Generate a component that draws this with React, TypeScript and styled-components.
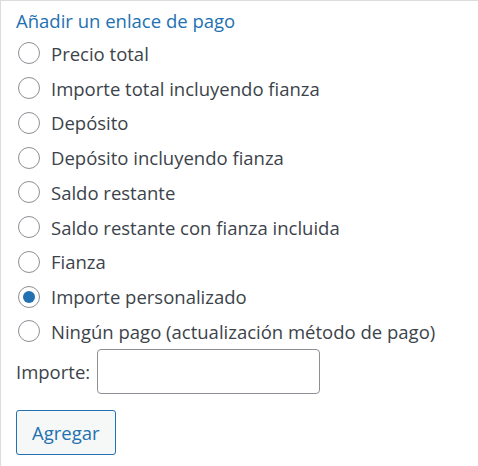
import React, { useState } from "react";
import styled, { createGlobalStyle } from "styled-components";

const GlobalStyle = createGlobalStyle`
  html, body { margin: 0; padding: 0; background: #fff; }
  body { font-family: "Open Sans", "Noto Sans", sans-serif; color: #3c434a; }
  * { box-sizing: border-box; }
`;

const options = [
  "Precio total",
  "Importe total incluyendo fianza",
  "Depósito",
  "Depósito incluyendo fianza",
  "Saldo restante",
  "Saldo restante con fianza incluida",
  "Fianza",
  "Importe personalizado",
  "Ningún pago (actualización método de pago)",
];

export default function App() {
  const [selected, setSelected] = useState<number>(7);
  const [amount, setAmount] = useState<string>("");

  return (
    <>
      <GlobalStyle />
      <Panel>
        <Title>Añadir un enlace de pago</Title>
        <List>
          {options.map((label, i) => (
            <Option key={label}>
              <Radio
                type="radio"
                name="payment"
                checked={selected === i}
                onChange={() => setSelected(i)}
              />
              <span>{label}</span>
            </Option>
          ))}
        </List>
        <AmountRow>
          <label htmlFor="amount">Importe:</label>
          <AmountInput
            id="amount"
            type="text"
            value={amount}
            onChange={(e) => setAmount(e.target.value)}
          />
        </AmountRow>
        <Button type="button">Agregar</Button>
      </Panel>
    </>
  );
}

const Panel = styled.div`
  width: 478px;
  height: 466px;
  border-top: 1px solid #dcdcde;
  border-left: 1px solid #dcdcde;
  padding: 8px 0 0 15px;
  font-size: 18.5px;
`;

const Title = styled.div`
  color: #2271b1;
  font-size: 18.5px;
  line-height: 24px;
  margin-bottom: 3px;
`;

const List = styled.div`
  display: flex;
  flex-direction: column;
`;

const Option = styled.label`
  display: flex;
  align-items: center;
  gap: 11px;
  height: 34.75px;
  font-size: 18.5px;
  color: #3c434a;
  cursor: pointer;
`;

const Radio = styled.input`
  appearance: none;
  margin: 0 0 0 2px;
  width: 22px;
  height: 22px;
  border: 1px solid #8c8f94;
  border-radius: 50%;
  background: #fff;
  display: grid;
  place-items: center;
  flex-shrink: 0;
  cursor: pointer;

  &:checked::before {
    content: "";
    width: 12px;
    height: 12px;
    border-radius: 50%;
    background: #2271b1;
  }
`;

const AmountRow = styled.div`
  display: flex;
  align-items: center;
  gap: 7px;
  margin-top: 0;
  font-size: 18.5px;
`;

const AmountInput = styled.input`
  width: 223px;
  height: 45px;
  border: 1px solid #8c8f94;
  border-radius: 4px;
  padding: 0 8px;
  font: inherit;
`;

const Button = styled.button`
  margin-top: 16px;
  height: 45px;
  padding: 0 15px;
  border: 1px solid #2271b1;
  border-radius: 3px;
  background: #f6f7f7;
  color: #2271b1;
  font-family: inherit;
  font-size: 18.5px;
  cursor: pointer;
`;
